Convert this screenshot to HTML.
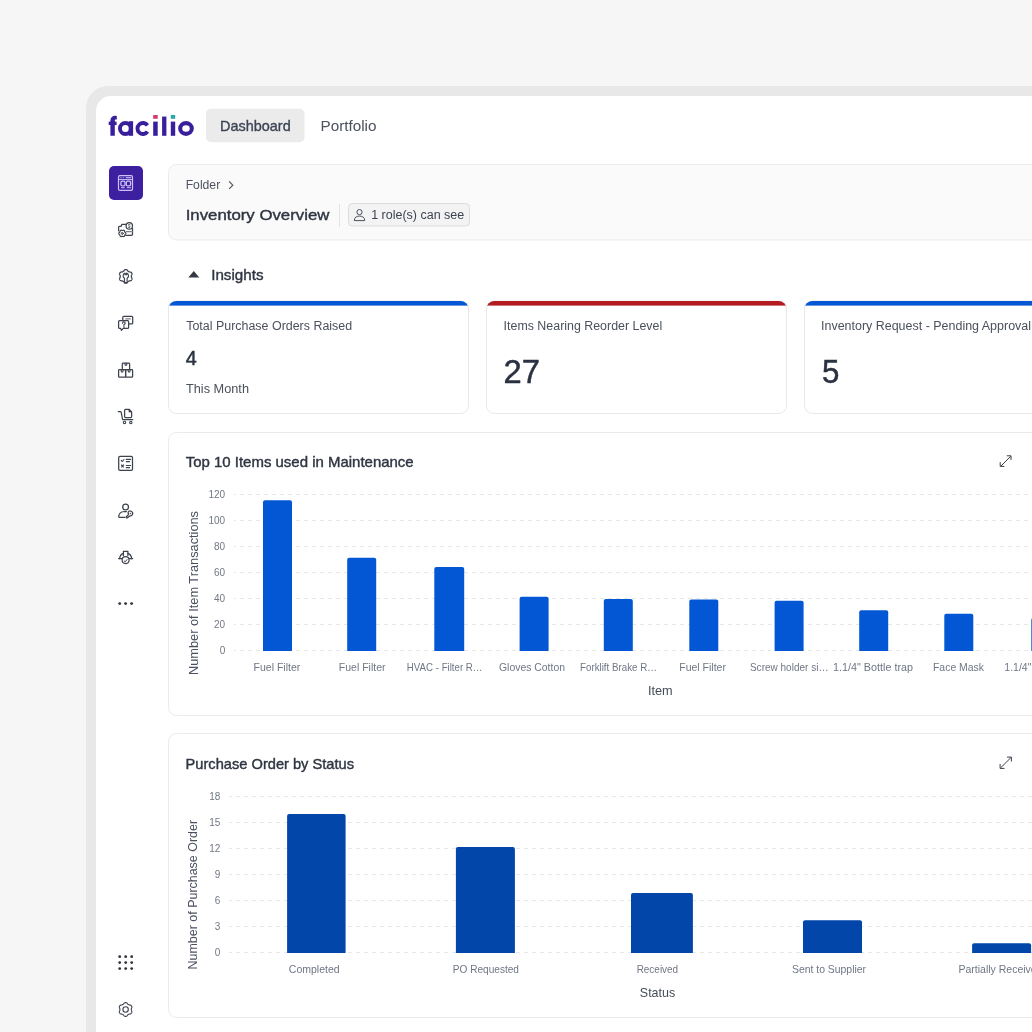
<!DOCTYPE html>
<html>
<head>
<meta charset="utf-8">
<style>
html,body{margin:0;padding:0;width:1032px;height:1032px;overflow:hidden;background:#f6f6f6;}
svg{position:absolute;left:0;top:0;display:block;will-change:transform;}
text{font-family:"Liberation Sans", sans-serif;}
</style>
</head>
<body>
<svg width="1032" height="1032" viewBox="0 0 1032 1032">
<defs>
  <clipPath id="k1"><rect x="168.5" y="301" width="300" height="112.5" rx="8"/></clipPath>
  <clipPath id="k2"><rect x="486.5" y="301" width="300" height="112.5" rx="8"/></clipPath>
  <clipPath id="k3"><rect x="804.5" y="301" width="300" height="112.5" rx="8"/></clipPath>
</defs>
<!-- background -->
<rect x="0" y="0" width="1032" height="1032" fill="#f6f6f6"/>
<!-- device frame -->
<rect x="86" y="86" width="1100" height="1100" rx="22" fill="#e8e8e8"/>
<rect x="96" y="96" width="1100" height="1100" rx="15" fill="#ffffff"/>

<!-- LOGO -->
<g id="logo" fill="#3a1f9c">
  <!-- f -->
  <path d="M110.4 135.8 V121 C110.4 117.5 112.5 115.8 115.5 115.8 L116.8 115.9 L116.8 119.6 L115.8 119.5 C115 119.5 114.8 120 114.8 121 V135.8 Z"/>
  <rect x="108.7" y="121.6" width="7.9" height="3.4"/>
  <!-- a -->
  <circle cx="125.4" cy="128.5" r="5.45" fill="none" stroke="#3a1f9c" stroke-width="3.9"/>
  <rect x="128.8" y="121.2" width="4.3" height="14.6"/>
  <!-- c -->
  <path d="M147.5 125.35 A5.5 5.5 0 1 0 147.5 131.65" fill="none" stroke="#3a1f9c" stroke-width="3.9"/>
  <!-- i -->
  <rect x="153.2" y="121.6" width="4.5" height="14.2"/>
  <rect x="153.2" y="115" width="4.5" height="3.8" fill="#d83a6d"/>
  <!-- l -->
  <rect x="162.1" y="116.6" width="4.3" height="19.2"/>
  <!-- i -->
  <rect x="170.8" y="121.6" width="4.4" height="14.2"/>
  <rect x="170.8" y="115" width="4.4" height="3.8" fill="#2ba7a9"/>
  <!-- o -->
  <ellipse cx="186" cy="128.5" rx="5.8" ry="5.35" fill="none" stroke="#3a1f9c" stroke-width="4.1"/>
</g>

<!-- top tabs -->
<rect x="206" y="108.7" width="98.5" height="33.5" rx="5" fill="#ebebec"/>
<text x="220" y="131" font-size="15" fill="#3d4454" stroke="#3d4454" stroke-width="0.35" textLength="70.7" lengthAdjust="spacingAndGlyphs">Dashboard</text>
<text x="320.5" y="131" font-size="15" fill="#4a505c" textLength="56" lengthAdjust="spacingAndGlyphs">Portfolio</text>

<!-- sidebar active -->
<rect x="109" y="166" width="34" height="34" rx="5" fill="#3c20a0"/>

<!-- header card -->
<rect x="168.5" y="164.5" width="1000" height="75.5" rx="8" fill="#fafafa" stroke="#ebebeb" stroke-width="1"/>
<text x="185.7" y="189.2" font-size="12.3" fill="#4d5360" textLength="34.5" lengthAdjust="spacingAndGlyphs">Folder</text>
<path d="M229.2 181.5 L232.8 185.2 L229.2 188.9" fill="none" stroke="#555b66" stroke-width="1.2"/>
<text x="185.7" y="220.4" font-size="15.2" fill="#2f3542" stroke="#2f3542" stroke-width="0.4" textLength="143.7" lengthAdjust="spacingAndGlyphs">Inventory Overview</text>
<line x1="339.5" y1="204" x2="339.5" y2="227" stroke="#e4e4e4" stroke-width="1"/>
<rect x="348.5" y="203.5" width="121" height="22.5" rx="4" fill="#f3f3f4" stroke="#dcdcdc" stroke-width="1"/>
<g fill="none" stroke="#4a505b" stroke-width="1">
  <circle cx="359.5" cy="212.1" r="2.6"/>
  <path d="M354.3 220.6 C354.3 217.3 356.6 216.1 359.5 216.1 C362.4 216.1 364.7 217.3 364.7 220.6 Z"/>
</g>
<text x="371.2" y="219" font-size="12.5" fill="#3c4250" textLength="93" lengthAdjust="spacingAndGlyphs">1 role(s) can see</text>

<!-- insights -->
<path d="M188.3 277.4 L193.8 271 L199.3 277.4 Z" fill="#333842"/>
<text x="211.2" y="279.7" font-size="15" fill="#2f3542" stroke="#2f3542" stroke-width="0.4" textLength="52.3" lengthAdjust="spacingAndGlyphs">Insights</text>

<!-- KPI cards -->
<g>
  <rect x="168.5" y="301" width="300" height="112.5" rx="8" fill="#fff" stroke="#e8e8e8"/>
  <rect x="160" y="295" width="320" height="10.6" fill="#0457d5" clip-path="url(#k1)"/>
  <text x="186.2" y="329.8" font-size="12.5" fill="#4a505c" textLength="166" lengthAdjust="spacingAndGlyphs">Total Purchase Orders Raised</text>
  <text x="185.7" y="364.8" font-size="21" fill="#2a3140" stroke="#2a3140" stroke-width="0.5" textLength="11" lengthAdjust="spacingAndGlyphs">4</text>
  <text x="186" y="393.3" font-size="12.7" fill="#4a505c" textLength="63" lengthAdjust="spacingAndGlyphs">This Month</text>

  <rect x="486.5" y="301" width="300" height="112.5" rx="8" fill="#fff" stroke="#e8e8e8"/>
  <rect x="480" y="295" width="320" height="10.6" fill="#b41b21" clip-path="url(#k2)"/>
  <text x="503.6" y="329.8" font-size="12.5" fill="#4a505c" textLength="158.6" lengthAdjust="spacingAndGlyphs">Items Nearing Reorder Level</text>
  <text x="503.6" y="383.3" font-size="34" fill="#2a3140" stroke="#2a3140" stroke-width="0.5" textLength="36.4" lengthAdjust="spacingAndGlyphs">27</text>

  <rect x="804.5" y="301" width="300" height="112.5" rx="8" fill="#fff" stroke="#e8e8e8"/>
  <rect x="800" y="295" width="320" height="10.6" fill="#0457d5" clip-path="url(#k3)"/>
  <text x="821" y="329.8" font-size="12.5" fill="#4a505c" textLength="210" lengthAdjust="spacingAndGlyphs">Inventory Request - Pending Approval</text>
  <text x="822" y="383" font-size="34" fill="#2a3140" stroke="#2a3140" stroke-width="0.5" textLength="17.4" lengthAdjust="spacingAndGlyphs">5</text>
</g>

<!-- CHART 1 -->
<g id="chart1">
  <rect x="168.5" y="432.5" width="1000" height="283" rx="8" fill="#fff" stroke="#ebebeb"/>
  <text x="185.7" y="466.7" font-size="14.5" fill="#2f3542" stroke="#2f3542" stroke-width="0.4" textLength="228" lengthAdjust="spacingAndGlyphs">Top 10 Items used in Maintenance</text>
  <g stroke="#e8e8e8" stroke-width="1" stroke-dasharray="4 4" stroke-dashoffset="2">
    <line x1="234" y1="494.5" x2="1040" y2="494.5"/>
    <line x1="234" y1="520.5" x2="1040" y2="520.5"/>
    <line x1="234" y1="546.5" x2="1040" y2="546.5"/>
    <line x1="234" y1="572.5" x2="1040" y2="572.5"/>
    <line x1="234" y1="598.5" x2="1040" y2="598.5"/>
    <line x1="234" y1="624.5" x2="1040" y2="624.5"/>
    <line x1="234" y1="650.5" x2="1040" y2="650.5"/>
  </g>
  <g font-size="10" fill="#717784" text-anchor="end">
    <text x="225.2" y="497.6">120</text>
    <text x="225.2" y="523.7">100</text>
    <text x="225.2" y="549.8">80</text>
    <text x="225.2" y="575.8">60</text>
    <text x="225.2" y="601.9">40</text>
    <text x="225.2" y="628">20</text>
    <text x="225.2" y="654">0</text>
  </g>
  <text transform="translate(198.2 593) rotate(-90)" font-size="12.8" fill="#4b5060" text-anchor="middle" textLength="164" lengthAdjust="spacingAndGlyphs">Number of Item Transactions</text>
  <g fill="#0357d5">
    <path d="M263 651 V502.3 Q263 500.3 265 500.3 H290 Q292 500.3 292 502.3 V651 Z"/>
    <path d="M347.2 651 V559.7 Q347.2 557.7 349.2 557.7 H374.2 Q376.2 557.7 376.2 559.7 V651 Z"/>
    <path d="M434.3 651 V569 Q434.3 567 436.3 567 H462.2 Q464.2 567 464.2 569 V651 Z"/>
    <path d="M519.6 651 V598.7 Q519.6 596.7 521.6 596.7 H546.6 Q548.6 596.7 548.6 598.7 V651 Z"/>
    <path d="M603.8 651 V600.9 Q603.8 598.9 605.8 598.9 H630.8 Q632.8 598.9 632.8 600.9 V651 Z"/>
    <path d="M689.3 651 V601.6 Q689.3 599.6 691.3 599.6 H716.3 Q718.3 599.6 718.3 601.6 V651 Z"/>
    <path d="M774.6 651 V602.7 Q774.6 600.7 776.6 600.7 H801.6 Q803.6 600.7 803.6 602.7 V651 Z"/>
    <path d="M859.2 651 V612.2 Q859.2 610.2 861.2 610.2 H886.2 Q888.2 610.2 888.2 612.2 V651 Z"/>
    <path d="M944.3 651 V615.7 Q944.3 613.7 946.3 613.7 H971.3 Q973.3 613.7 973.3 615.7 V651 Z"/>
    <path d="M1031.3 651 V619.9 Q1031.3 617.9 1033.3 617.9 H1058.3 Q1060.3 617.9 1060.3 619.9 V651 Z"/>
  </g>
  <g font-size="10.5" fill="#6f7685" text-anchor="middle">
    <text x="276.9" y="670.9">Fuel Filter</text>
    <text x="362.2" y="670.9">Fuel Filter</text>
    <text x="444.7" y="670.9" textLength="75.7" lengthAdjust="spacingAndGlyphs">HVAC - Filter R…</text>
    <text x="532" y="670.9" textLength="66" lengthAdjust="spacingAndGlyphs">Gloves Cotton</text>
    <text x="618.5" y="670.9" textLength="77" lengthAdjust="spacingAndGlyphs">Forklift Brake R…</text>
    <text x="702.6" y="670.9">Fuel Filter</text>
    <text x="789.2" y="670.9" textLength="78.5" lengthAdjust="spacingAndGlyphs">Screw holder si…</text>
    <text x="873" y="670.9" textLength="80" lengthAdjust="spacingAndGlyphs">1.1/4" Bottle trap</text>
    <text x="958.5" y="670.9" textLength="51" lengthAdjust="spacingAndGlyphs">Face Mask</text>
    <text x="1004.3" y="670.9" text-anchor="start">1.1/4" Drain Trap</text>
  </g>
  <text x="660.3" y="695" font-size="12.7" fill="#454b57" text-anchor="middle">Item</text>
  <g fill="none" stroke="#3a3f4a" stroke-width="1" stroke-linecap="round">
    <path d="M1001.2 465.8 L1010.4 456.6"/>
    <path d="M1007.2 455.8 H1011 V459.6"/>
    <path d="M1000.2 462.6 V466.4 H1004"/>
  </g>
</g>

<!-- CHART 2 -->
<g id="chart2">
  <rect x="168.5" y="733.5" width="1000" height="284" rx="8" fill="#fff" stroke="#ebebeb"/>
  <text x="185.6" y="768.6" font-size="14.5" fill="#2f3542" stroke="#2f3542" stroke-width="0.4" textLength="168.4" lengthAdjust="spacingAndGlyphs">Purchase Order by Status</text>
  <g stroke="#e8e8e8" stroke-width="1" stroke-dasharray="4 4" stroke-dashoffset="1">
    <line x1="229" y1="796.5" x2="1040" y2="796.5"/>
    <line x1="229" y1="822.5" x2="1040" y2="822.5"/>
    <line x1="229" y1="848.5" x2="1040" y2="848.5"/>
    <line x1="229" y1="874.5" x2="1040" y2="874.5"/>
    <line x1="229" y1="900.5" x2="1040" y2="900.5"/>
    <line x1="229" y1="926.5" x2="1040" y2="926.5"/>
    <line x1="229" y1="952.5" x2="1040" y2="952.5"/>
  </g>
  <g font-size="10" fill="#717784" text-anchor="end">
    <text x="220.3" y="799.6">18</text>
    <text x="220.3" y="825.7">15</text>
    <text x="220.3" y="851.8">12</text>
    <text x="220.3" y="877.9">9</text>
    <text x="220.3" y="904">6</text>
    <text x="220.3" y="930.1">3</text>
    <text x="220.3" y="956.2">0</text>
  </g>
  <text transform="translate(197.4 894.7) rotate(-90)" font-size="12.5" fill="#4b5060" text-anchor="middle" textLength="149.6" lengthAdjust="spacingAndGlyphs">Number of Purchase Order</text>
  <g fill="#0246aa">
    <path d="M287.1 953 V815.9 Q287.1 813.9 289.1 813.9 H343.6 Q345.6 813.9 345.6 815.9 V953 Z"/>
    <path d="M455.9 953 V848.9 Q455.9 846.9 457.9 846.9 H512.9 Q514.9 846.9 514.9 848.9 V953 Z"/>
    <path d="M631 953 V895 Q631 893 633 893 H690.9 Q692.9 893 692.9 895 V953 Z"/>
    <path d="M803 953 V922.2 Q803 920.2 805 920.2 H860 Q862 920.2 862 922.2 V953 Z"/>
    <path d="M972.1 953 V945.3 Q972.1 943.3 974.1 943.3 H1029.1 Q1031.1 943.3 1031.1 945.3 V953 Z"/>
  </g>
  <g font-size="10.5" fill="#6f7685" text-anchor="middle">
    <text x="314.25" y="973" textLength="50.9" lengthAdjust="spacingAndGlyphs">Completed</text>
    <text x="485.9" y="973" textLength="66.2" lengthAdjust="spacingAndGlyphs">PO Requested</text>
    <text x="657.4" y="973" textLength="41.5" lengthAdjust="spacingAndGlyphs">Received</text>
    <text x="829" y="973" textLength="74.1" lengthAdjust="spacingAndGlyphs">Sent to Supplier</text>
    <text x="1000.5" y="973">Partially Received</text>
  </g>
  <text x="657.5" y="996.5" font-size="12.9" fill="#454b57" text-anchor="middle" textLength="35.4" lengthAdjust="spacingAndGlyphs">Status</text>
  <g fill="none" stroke="#3a3f4a" stroke-width="1" stroke-linecap="round">
    <path d="M1000.9 767.6 L1010.6 757.9"/>
    <path d="M1007.4 757.1 H1011.4 V761.1"/>
    <path d="M1000.1 764.4 V768.4 H1004.1"/>
  </g>
</g>

<!-- SIDEBAR ICONS -->
<g id="icons">
<g fill="none" stroke="#3d424d" stroke-width="1.25" stroke-linecap="round" stroke-linejoin="round">
<path d="M126.3 224.3 H122.4 Q121.7 224.3 121.5 225 L121.2 226.3 H119.6 Q118.6 226.3 118.6 227.3 V230.8"/>
<path d="M132.5 228.6 V234.3 Q132.5 235.3 131.5 235.3 H125.8"/>
<circle cx="129.3" cy="225.9" r="3.2"/>
<path d="M130.1 224.5 Q129.3 223.9 128.6 224.6 Q128.4 225.5 129.3 225.9 Q130.3 226.3 130 227.2 Q129.3 227.9 128.4 227.3" stroke-width="0.9"/>
<path d="M125.80 233.40 L125.80 233.58 L125.78 233.77 L125.70 233.94 L125.56 234.09 L125.39 234.23 L125.22 234.35 L125.06 234.46 L124.95 234.58 L124.88 234.72 L124.81 234.85 L124.73 234.98 L124.65 235.10 L124.60 235.26 L124.58 235.45 L124.56 235.66 L124.53 235.87 L124.47 236.08 L124.36 236.23 L124.21 236.34 L124.05 236.43 L123.89 236.52 L123.72 236.60 L123.54 236.62 L123.33 236.57 L123.13 236.49 L122.94 236.40 L122.76 236.32 L122.60 236.28 L122.45 236.30 L122.30 236.30 L122.15 236.30 L122.00 236.28 L121.84 236.32 L121.66 236.40 L121.47 236.49 L121.27 236.57 L121.06 236.62 L120.88 236.60 L120.71 236.52 L120.55 236.43 L120.39 236.34 L120.24 236.23 L120.13 236.08 L120.07 235.87 L120.04 235.66 L120.02 235.45 L120.00 235.26 L119.95 235.10 L119.87 234.98 L119.79 234.85 L119.72 234.72 L119.65 234.58 L119.54 234.46 L119.38 234.35 L119.21 234.23 L119.04 234.09 L118.90 233.94 L118.82 233.77 L118.80 233.58 L118.80 233.40 L118.80 233.22 L118.82 233.03 L118.90 232.86 L119.04 232.71 L119.21 232.57 L119.38 232.45 L119.54 232.34 L119.65 232.22 L119.72 232.08 L119.79 231.95 L119.87 231.82 L119.95 231.70 L120.00 231.54 L120.02 231.35 L120.04 231.14 L120.07 230.93 L120.13 230.72 L120.24 230.57 L120.39 230.46 L120.55 230.37 L120.71 230.28 L120.88 230.20 L121.06 230.18 L121.27 230.23 L121.47 230.31 L121.66 230.40 L121.84 230.48 L122.00 230.52 L122.15 230.50 L122.30 230.50 L122.45 230.50 L122.60 230.52 L122.76 230.48 L122.94 230.40 L123.13 230.31 L123.33 230.23 L123.54 230.18 L123.72 230.20 L123.89 230.28 L124.05 230.37 L124.21 230.46 L124.36 230.57 L124.47 230.72 L124.53 230.93 L124.56 231.14 L124.58 231.35 L124.60 231.54 L124.65 231.70 L124.73 231.82 L124.81 231.95 L124.88 232.08 L124.95 232.22 L125.06 232.34 L125.22 232.45 L125.39 232.57 L125.56 232.71 L125.70 232.86 L125.78 233.03 L125.80 233.22 Z" stroke-width="1.15"/>
<circle cx="122.3" cy="233.4" r="1" stroke-width="1"/>
<path d="M126.2 231.7 H132.3" stroke="#7b808a" stroke-width="1.3"/>
<path d="M131.40 276.40 L131.39 276.69 L131.37 276.99 L131.44 277.29 L131.61 277.64 L131.79 278.00 L131.94 278.40 L132.05 278.80 L132.01 279.17 L131.86 279.49 L131.69 279.80 L131.50 280.10 L131.30 280.40 L131.00 280.61 L130.60 280.72 L130.18 280.78 L129.77 280.81 L129.39 280.83 L129.09 280.93 L128.85 281.10 L128.60 281.25 L128.34 281.39 L128.08 281.52 L127.84 281.73 L127.64 282.05 L127.40 282.39 L127.14 282.72 L126.85 283.01 L126.51 283.16 L126.16 283.19 L125.80 283.20 L125.44 283.19 L125.09 283.16 L124.75 283.01 L124.46 282.72 L124.20 282.39 L123.96 282.05 L123.76 281.73 L123.52 281.52 L123.26 281.39 L123.00 281.25 L122.75 281.10 L122.51 280.93 L122.21 280.83 L121.83 280.81 L121.42 280.78 L121.00 280.72 L120.60 280.61 L120.30 280.40 L120.10 280.10 L119.91 279.80 L119.74 279.49 L119.59 279.17 L119.55 278.80 L119.66 278.40 L119.81 278.00 L119.99 277.64 L120.16 277.29 L120.23 276.99 L120.21 276.69 L120.20 276.40 L120.21 276.11 L120.23 275.81 L120.16 275.51 L119.99 275.16 L119.81 274.80 L119.66 274.40 L119.55 274.00 L119.59 273.63 L119.74 273.31 L119.91 273.00 L120.10 272.70 L120.30 272.40 L120.60 272.19 L121.00 272.08 L121.42 272.02 L121.83 271.99 L122.21 271.97 L122.51 271.87 L122.75 271.70 L123.00 271.55 L123.26 271.41 L123.52 271.28 L123.76 271.07 L123.96 270.75 L124.20 270.41 L124.46 270.08 L124.75 269.79 L125.09 269.64 L125.44 269.61 L125.80 269.60 L126.16 269.61 L126.51 269.64 L126.85 269.79 L127.14 270.08 L127.40 270.41 L127.64 270.75 L127.84 271.07 L128.08 271.28 L128.34 271.41 L128.60 271.55 L128.85 271.70 L129.09 271.87 L129.39 271.97 L129.77 271.99 L130.18 272.02 L130.60 272.08 L131.00 272.19 L131.30 272.40 L131.50 272.70 L131.69 273.00 L131.86 273.31 L132.01 273.63 L132.05 274.00 L131.94 274.40 L131.79 274.80 L131.61 275.16 L131.44 275.51 L131.37 275.81 L131.39 276.11 Z"/>
<path d="M125.1 273.1 V274.7 H126.5 V273.1 A2.85 2.85 0 0 1 127.1 278.3 V282.6 H124.5 V278.3 A2.85 2.85 0 0 1 125.1 273.1 Z" stroke-width="1.15"/>
<path d="M122.8 320.3 V317.2 Q122.8 316.3 123.7 316.3 H131.8 Q132.7 316.3 132.7 317.2 V322.9 Q132.7 323.8 131.8 323.8 H128.7"/>
<path d="M125.8 318.9 H130.2" stroke="#7b808a" stroke-width="1.2"/>
<path d="M119.6 320.7 H127.6 Q128.6 320.7 128.6 321.7 V327.4 Q128.6 328.4 127.6 328.4 H123.3 L121.4 330.3 L120.7 328.4 H119.6 Q118.6 328.4 118.6 327.4 V321.7 Q118.6 320.7 119.6 320.7 Z"/>
<path d="M122.4 323.3 Q122.6 321.9 123.8 321.9 Q125.2 321.9 125.2 323.2 Q125.2 324.2 123.9 324.6 V325.6" stroke-width="1.1"/>
<circle cx="123.9" cy="327" r="0.3" fill="#3d424d" stroke-width="0.7"/>
<rect x="122.3" y="363.1" width="7.3" height="6.6" rx="0.8"/>
<rect x="118.6" y="369.7" width="7" height="7.5" rx="0.8"/>
<rect x="125.6" y="369.7" width="7" height="7.5" rx="0.8"/>
<path d="M125 363.3 V364.5 Q125 365.4 125.9 365.4 Q126.8 365.4 126.8 364.5 V363.3" stroke-width="1.1"/>
<path d="M121.2 369.9 V371.3 Q121.2 372.2 122.1 372.2 Q123 372.2 123 371.3 V369.9" stroke-width="1.1"/>
<path d="M128.2 369.9 V371.3 Q128.2 372.2 129.1 372.2 Q130 372.2 130 371.3 V369.9" stroke-width="1.1"/>
<path d="M118.3 411.5 H120.2 Q121 411.5 121.2 412.4 L122.6 419.5 H132.8"/>
<path d="M124.6 416.6 V410.2 Q124.6 409.3 125.5 409.3 H129 L131.6 411.9 V416.6 Q131.6 417.5 130.7 417.5 H125.5 Q124.6 417.5 124.6 416.6 Z"/>
<path d="M129 409.5 V411.9 H131.5" fill="#3d424d" stroke-width="0.9"/>
<circle cx="124.5" cy="422.4" r="1.2" stroke-width="1.1"/>
<circle cx="130.8" cy="422.4" r="1.2" stroke-width="1.1"/>
<rect x="118.7" y="456.4" width="13.8" height="14" rx="1.3"/>
<path d="M121.2 460.4 L122.3 461.5 L124 459.5" stroke-width="1.1"/>
<path d="M126.3 459.4 H130.6 M126.3 461.6 H129.6" stroke-width="1.1"/>
<path d="M121.5 465 L123.5 467 M123.5 465 L121.5 467" stroke-width="1.1"/>
<path d="M126.3 465.5 H130.6 M126.3 467.6 H129.6" stroke-width="1.1"/>
<circle cx="125.6" cy="507" r="2.9"/>
<path d="M126.4 511.5 H124.3 Q119.2 511.8 118.7 516.4 Q118.7 517.4 119.7 517.4 H124.8"/>
<path d="M128.1 512.3 A2.45 2.45 0 1 1 129.8 515.9 L127.4 517.8 H126.3 V516.7 L128.5 514.6 Z"/>
<circle cx="130.3" cy="513.4" r="0.4" fill="#3d424d" stroke-width="0.6"/>
<path d="M123.4 555.4 V551.4 H127.9 V555.4"/>
<path d="M123.4 553.4 Q120 554.6 119.6 558.6 M127.9 553.4 Q131.3 554.6 131.7 558.6"/>
<path d="M118.6 558.6 H121.9 M129.4 558.6 H132.6"/>
<circle cx="125.6" cy="560.1" r="3.5" stroke-width="1.2"/>
<path d="M124.2 561 L125.2 561.8 L127 559.6" stroke-width="1"/>
<path d="M131.35 1009.50 L131.34 1009.80 L131.32 1010.10 L131.38 1010.41 L131.53 1010.76 L131.69 1011.13 L131.82 1011.52 L131.90 1011.92 L131.86 1012.29 L131.70 1012.61 L131.53 1012.92 L131.34 1013.23 L131.14 1013.53 L130.85 1013.75 L130.46 1013.87 L130.05 1013.95 L129.66 1014.00 L129.28 1014.04 L128.98 1014.15 L128.73 1014.32 L128.47 1014.48 L128.21 1014.62 L127.94 1014.75 L127.70 1014.96 L127.47 1015.27 L127.23 1015.59 L126.96 1015.90 L126.66 1016.17 L126.32 1016.31 L125.96 1016.34 L125.60 1016.35 L125.24 1016.34 L124.88 1016.31 L124.54 1016.17 L124.24 1015.90 L123.97 1015.59 L123.73 1015.27 L123.50 1014.96 L123.26 1014.75 L122.99 1014.62 L122.72 1014.48 L122.47 1014.32 L122.22 1014.15 L121.92 1014.04 L121.54 1014.00 L121.15 1013.95 L120.74 1013.87 L120.35 1013.75 L120.06 1013.53 L119.86 1013.23 L119.67 1012.92 L119.50 1012.61 L119.34 1012.29 L119.30 1011.92 L119.38 1011.52 L119.51 1011.13 L119.67 1010.76 L119.82 1010.41 L119.88 1010.10 L119.86 1009.80 L119.85 1009.50 L119.86 1009.20 L119.88 1008.90 L119.82 1008.59 L119.67 1008.24 L119.51 1007.87 L119.38 1007.48 L119.30 1007.08 L119.34 1006.71 L119.50 1006.39 L119.67 1006.08 L119.86 1005.77 L120.06 1005.47 L120.35 1005.25 L120.74 1005.13 L121.15 1005.05 L121.54 1005.00 L121.92 1004.96 L122.22 1004.85 L122.47 1004.68 L122.72 1004.52 L122.99 1004.38 L123.26 1004.25 L123.50 1004.04 L123.73 1003.73 L123.97 1003.41 L124.24 1003.10 L124.54 1002.83 L124.88 1002.69 L125.24 1002.66 L125.60 1002.65 L125.96 1002.66 L126.32 1002.69 L126.66 1002.83 L126.96 1003.10 L127.23 1003.41 L127.47 1003.73 L127.70 1004.04 L127.94 1004.25 L128.21 1004.38 L128.47 1004.52 L128.73 1004.68 L128.98 1004.85 L129.28 1004.96 L129.66 1005.00 L130.05 1005.05 L130.46 1005.13 L130.85 1005.25 L131.14 1005.47 L131.34 1005.77 L131.53 1006.08 L131.70 1006.39 L131.86 1006.71 L131.90 1007.08 L131.82 1007.48 L131.69 1007.87 L131.53 1008.24 L131.38 1008.59 L131.32 1008.90 L131.34 1009.20 Z" stroke-width="1.1"/>
<circle cx="125.6" cy="1009.5" r="2.7" stroke-width="1.1"/>
</g>
<g fill="#2f333b">
<circle cx="119.7" cy="603.6" r="1.45"/>
<circle cx="125.6" cy="603.6" r="1.45"/>
<circle cx="131.6" cy="603.6" r="1.45"/>
<circle cx="119.7" cy="956.7" r="1.4"/>
<circle cx="125.7" cy="956.7" r="1.4"/>
<circle cx="131.7" cy="956.7" r="1.4"/>
<circle cx="119.7" cy="962.6" r="1.4"/>
<circle cx="125.7" cy="962.6" r="1.4"/>
<circle cx="131.7" cy="962.6" r="1.4"/>
<circle cx="119.7" cy="968.6" r="1.4"/>
<circle cx="125.7" cy="968.6" r="1.4"/>
<circle cx="131.7" cy="968.6" r="1.4"/>
</g>
<g fill="none" stroke="#cdc0fa" stroke-width="1.2">
<rect x="118.5" y="175.7" width="14" height="14.6" rx="1.4"/>
<path d="M119 179.6 H132" stroke-width="1"/>
<path d="M125.7 177.7 H131.2" stroke-width="1.1"/>
<rect x="120.9" y="181.1" width="4.1" height="4.8" rx="1.5" stroke-width="1.3"/>
<rect x="126.3" y="181.1" width="4.3" height="4.8" rx="1.5" stroke-width="1.3"/>
<path d="M121 187.7 H124.8 M126.9 187.7 H130.8" stroke-width="1"/>
</g>
<g fill="#cdc0fa"><circle cx="120.3" cy="177.7" r="0.5"/><circle cx="121.9" cy="177.7" r="0.5"/><circle cx="123.5" cy="177.7" r="0.5"/></g>
</g>
</svg>
</body>
</html>
